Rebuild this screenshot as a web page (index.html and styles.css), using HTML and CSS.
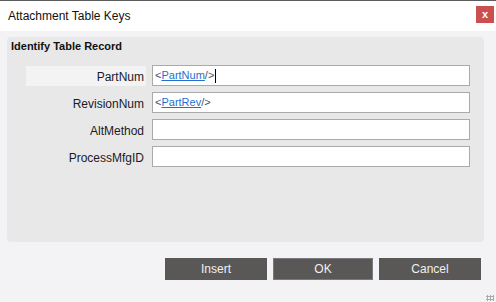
FILE: index.html
```html
<!DOCTYPE html>
<html>
<head>
<meta charset="utf-8">
<link rel="stylesheet" href="styles.css">
</head>
<body>
<div class="dialog">
  <div class="titlebar">
    <span class="title">Attachment Table Keys</span>
    <span class="close">x</span>
  </div>
  <div class="content">
    <div class="group">
      <div class="group-title">Identify Table Record</div>
      <div class="rows">
        <div class="row">
          <div class="label focused">PartNum</div>
          <div class="input"><span class="br">&lt;</span><span class="link">PartNum</span><span class="br">/&gt;</span><span class="caret"></span></div>
        </div>
        <div class="row">
          <div class="label">RevisionNum</div>
          <div class="input"><span class="br">&lt;</span><span class="link">PartRev</span><span class="br">/&gt;</span></div>
        </div>
        <div class="row">
          <div class="label">AltMethod</div>
          <div class="input"></div>
        </div>
        <div class="row">
          <div class="label">ProcessMfgID</div>
          <div class="input"></div>
        </div>
      </div>
    </div>
    <div class="buttons">
      <button class="btn">Insert</button>
      <button class="btn ok">OK</button>
      <button class="btn">Cancel</button>
    </div>
    <div class="grip"></div>
  </div>
</div>
</body>
</html>
```
FILE: styles.css
```css
html, body {
  margin: 0;
  padding: 0;
  width: 496px;
  height: 302px;
  overflow: hidden;
  font-family: "Liberation Sans", Arial, sans-serif;
}
.dialog {
  width: 496px;
  height: 302px;
  border-top: 1px solid #5c5c5c;
  box-sizing: border-box;
  display: flex;
  flex-direction: column;
  background: #f3f3f5;
}
.titlebar {
  height: 30px;
  background: #ffffff;
  display: flex;
  align-items: center;
  justify-content: space-between;
  padding-left: 8px;
  padding-right: 2px;
  flex-shrink: 0;
}
.title {
  font-size: 12px;
  color: #111;
  margin-top: -1px;
}
.close {
  width: 18px;
  height: 17px;
  background: #c9504f;
  color: #fff;
  font-size: 11px;
  font-weight: bold;
  display: flex;
  align-items: center;
  justify-content: center;
  margin-top: -3px;
  line-height: 1;
}
.content {
  position: relative;
  flex: 1;
  padding: 6px 0 0 7px;
}
.group {
  width: 477px;
  height: 205px;
  background: #e8e8e8;
  border-radius: 4px;
  box-sizing: border-box;
  padding: 3px 0 0 4px;
}
.group-title {
  font-size: 11px;
  font-weight: bold;
  color: #111;
  line-height: 13px;
}
.rows {
  margin-top: 12px;
  padding-left: 15px;
  display: flex;
  flex-direction: column;
  gap: 6px;
}
.row {
  display: flex;
  align-items: center;
  gap: 6px;
  height: 21px;
}
.label {
  width: 120px;
  height: 20px;
  box-sizing: border-box;
  text-align: right;
  padding-right: 2px;
  font-size: 12px;
  line-height: 22px;
  color: #1a1a2a;
}
.label.focused {
  background: #f3f3f3;
}
.input {
  width: 318px;
  height: 21px;
  box-sizing: border-box;
  border: 1px solid #aaaaaa;
  background: #fff;
  font-size: 11px;
  line-height: 19px;
  padding-left: 2px;
  display: flex;
  align-items: center;
  color: #444;
}
.br {
  color: #505068;
}
.link {
  color: #1f6fd1;
  text-decoration: underline;
}
.caret {
  width: 1px;
  height: 14px;
  background: #000;
  margin-left: 1px;
}
.buttons {
  display: flex;
  justify-content: flex-end;
  gap: 6px;
  padding-right: 15px;
  margin-top: 16px;
}
.btn {
  width: 102px;
  height: 22px;
  background: #5a5856;
  border: none;
  color: #f0f0f0;
  font-family: "Liberation Sans", Arial, sans-serif;
  font-size: 12px;
  padding: 0;
  margin: 0;
}
.btn.ok {
  width: 100px;
  border: 1px solid #7a7a7e;
}
.grip {
  position: absolute;
  right: 2px;
  bottom: 1px;
  width: 8px;
  height: 6px;
  background-image: radial-gradient(circle, #a9a9ad 1px, transparent 1.1px);
  background-size: 3px 3px;
}
```
